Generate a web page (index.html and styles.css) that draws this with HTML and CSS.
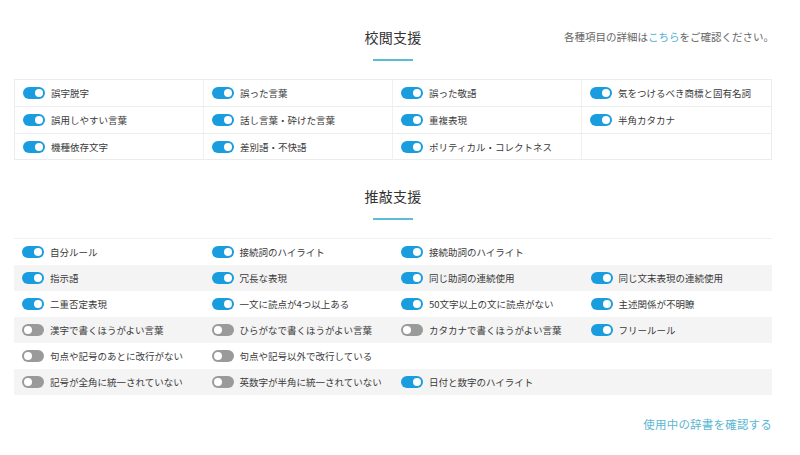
FILE: index.html
```html
<!DOCTYPE html>
<html lang="ja">
<head>
<meta charset="utf-8">
<link rel="stylesheet" href="styles.css">
</head>
<body>
<div class="page">
  <div class="head">
    <div></div>
    <div class="title-wrap">
      <h2 class="title">校閲支援</h2>
      <div class="bar"></div>
    </div>
    <p class="note">各種項目の詳細は<a class="link">こちら</a>をご確認ください。</p>
  </div>
  <div class="grid bordered">
    <div class="cell"><span class="tg on"></span>誤字脱字</div>
    <div class="cell"><span class="tg on"></span>誤った言葉</div>
    <div class="cell"><span class="tg on"></span>誤った敬語</div>
    <div class="cell"><span class="tg on"></span>気をつけるべき商標と固有名詞</div>
    <div class="cell"><span class="tg on"></span>誤用しやすい言葉</div>
    <div class="cell"><span class="tg on"></span>話し言葉・砕けた言葉</div>
    <div class="cell"><span class="tg on"></span>重複表現</div>
    <div class="cell"><span class="tg on"></span>半角カタカナ</div>
    <div class="cell last"><span class="tg on"></span>機種依存文字</div>
    <div class="cell last"><span class="tg on"></span>差別語・不快語</div>
    <div class="cell last"><span class="tg on"></span>ポリティカル・コレクトネス</div>
    <div class="cell last"></div>
  </div>

  <div class="head head2">
    <div></div>
    <div class="title-wrap">
      <h2 class="title">推敲支援</h2>
      <div class="bar"></div>
    </div>
    <div></div>
  </div>
  <div class="grid striped">
    <div class="row">
      <div class="cell"><span class="tg on"></span>自分ルール</div>
      <div class="cell"><span class="tg on"></span>接続詞のハイライト</div>
      <div class="cell"><span class="tg on"></span>接続助詞のハイライト</div>
      <div class="cell"></div>
    </div>
    <div class="row">
      <div class="cell"><span class="tg on"></span>指示語</div>
      <div class="cell"><span class="tg on"></span>冗長な表現</div>
      <div class="cell"><span class="tg on"></span>同じ助詞の連続使用</div>
      <div class="cell"><span class="tg on"></span>同じ文末表現の連続使用</div>
    </div>
    <div class="row">
      <div class="cell"><span class="tg on"></span>二重否定表現</div>
      <div class="cell"><span class="tg on"></span>一文に読点が4つ以上ある</div>
      <div class="cell"><span class="tg on"></span>50文字以上の文に読点がない</div>
      <div class="cell"><span class="tg on"></span>主述関係が不明瞭</div>
    </div>
    <div class="row">
      <div class="cell"><span class="tg"></span>漢字で書くほうがよい言葉</div>
      <div class="cell"><span class="tg"></span>ひらがなで書くほうがよい言葉</div>
      <div class="cell"><span class="tg"></span>カタカナで書くほうがよい言葉</div>
      <div class="cell"><span class="tg on"></span>フリールール</div>
    </div>
    <div class="row">
      <div class="cell"><span class="tg"></span>句点や記号のあとに改行がない</div>
      <div class="cell"><span class="tg"></span>句点や記号以外で改行している</div>
      <div class="cell"></div>
      <div class="cell"></div>
    </div>
    <div class="row">
      <div class="cell"><span class="tg"></span>記号が全角に統一されていない</div>
      <div class="cell"><span class="tg"></span>英数字が半角に統一されていない</div>
      <div class="cell"><span class="tg on"></span>日付と数字のハイライト</div>
      <div class="cell"></div>
    </div>
  </div>

  <div class="foot">
    <a class="dict">使用中の辞書を確認する</a>
  </div>
</div>
</body>
</html>
```

FILE: styles.css
```css
* { box-sizing: border-box; }
html, body { margin: 0; padding: 0; background: #fff; }
body {
  font-family: "Noto Sans CJK JP", "Noto Sans", sans-serif;
  color: #333;
  width: 800px;
  height: 455px;
  overflow: hidden;
}
.page {
  width: 758px;
  margin-left: 14px;
}
.head {
  display: grid;
  grid-template-columns: 1fr auto 1fr;
  align-items: start;
  padding-top: 27px;
}
.head2 { padding-top: 26px; }
.title-wrap {
  display: flex;
  flex-direction: column;
  align-items: center;
}
.title {
  margin: 0;
  font-size: 14px;
  font-weight: normal;
  line-height: 20px;
  color: #333;
  letter-spacing: 0.3px;
}
.bar {
  width: 40px;
  height: 2px;
  background: #5bbcd2;
  margin-top: 12px;
  margin-bottom: 18px;
}
.note {
  margin: 2px -2px 0 0;
  justify-self: end;
  font-size: 10.5px;
  line-height: 16px;
  color: #666;
  white-space: nowrap;
}
.link { color: #4fb2d6; }
.grid {
  display: grid;
  grid-template-columns: repeat(4, 1fr);
  font-size: 9.5px;
}
.bordered {
  border: 1px solid #ececec;
  border-bottom: none;
}
.bordered .cell {
  height: 27px;
  border-bottom: 1px solid #ececec;
  border-right: 1px solid #f0f0f0;
}
.bordered .cell.last { height: 26px; }
.bordered .cell:nth-child(4n) { border-right: none; }
.striped {
  border-top: 1px solid #f0f0f0;
}
.row { display: contents; }
.striped .cell { height: 26px; }
.striped .row:nth-child(even) .cell { background: #f4f4f4; }
.cell {
  display: flex;
  align-items: center;
  padding-left: 8px;
  gap: 6px;
  white-space: nowrap;
  color: #3a3a3a;
}
.tg {
  position: relative;
  flex: none;
  width: 22px;
  height: 12px;
  border-radius: 6px;
  background: #9a9a9a;
}
.tg::after {
  content: "";
  position: absolute;
  top: 2px;
  left: 2px;
  width: 8px;
  height: 8px;
  border-radius: 50%;
  background: #fff;
}
.tg.on { background: #1a9ddf; }
.tg.on::after { left: 12px; }
.foot {
  display: flex;
  justify-content: flex-end;
  padding-top: 21px;
}
.dict {
  font-size: 11.5px;
  line-height: 16px;
  color: #5ab6d2;
  letter-spacing: 0.2px;
}
```
